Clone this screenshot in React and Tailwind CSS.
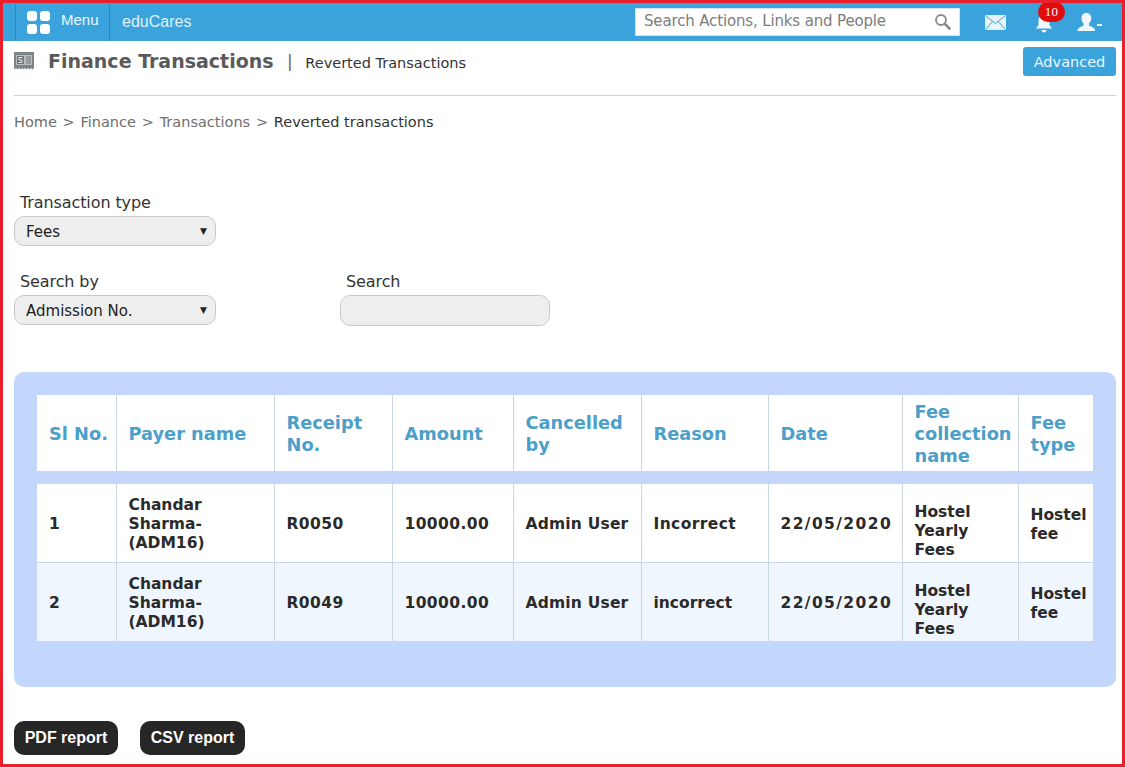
const columns = [
  { label: 'Sl No.', width: 'w-[79px]' },
  { label: 'Payer name', width: 'w-[158px]' },
  { label: 'Receipt No.', width: 'w-[118px]' },
  { label: 'Amount', width: 'w-[121px]' },
  { label: 'Cancelled by', width: 'w-[128px]' },
  { label: 'Reason', width: 'w-[127px]' },
  { label: 'Date', width: 'w-[134px]' },
  { label: 'Fee collection name', width: 'w-[116px]' },
  { label: 'Fee type', width: 'w-[75px]' },
];

const rows = [
  { sl: '1', reason: 'Incorrect', reasonClass: 'tracking-[0.400px]', receipt: 'R0050', bg: 'bg-white' },
  { sl: '2', reason: 'incorrect', reasonClass: '', receipt: 'R0049', bg: 'bg-[#f0f6fe]' },
];

function MenuIcon() {
  return (
    <svg width="23" height="23" viewBox="0 0 23 23" fill="#fff">
      <rect x="0" y="0" width="10" height="10" rx="3" />
      <rect x="13" y="0" width="10" height="10" rx="3" />
      <rect x="0" y="13" width="10" height="10" rx="3" />
      <rect x="13" y="13" width="10" height="10" rx="3" />
    </svg>
  );
}

function ReceiptIcon() {
  return (
    <svg width="20" height="18" viewBox="0 0 20 18">
      <path d="M0 0h20v16l-1.500 1.500-1.500-1.500-1.500 1.500-1.500-1.500-1.500 1.500-1.500-1.500-1.500 1.500-1.500-1.500-1.500 1.500-1.500-1.500-1.500 1.500-1.500-1.500-1.500 1.500L0 16z" fill="#7d8487" />
      <rect x="2" y="3" width="16" height="10" fill="#b9bec0" />
      <rect x="3" y="4" width="7" height="8" fill="#6d7477" />
      <path d="M12 5h5M12 7h5M12 9h5M12 11h5" stroke="#70777a" strokeWidth="1" />
      <path d="M8.500 5.500H5v2.500h3v2.500H4.500" stroke="#e8ecee" strokeWidth="1" fill="none" />
    </svg>
  );
}

function SearchIcon() {
  return (
    <svg width="17" height="17" viewBox="0 0 17 17" fill="none" stroke="#8a8a8a">
      <circle cx="7" cy="7" r="5" strokeWidth="1.800" />
      <path d="M10.800 10.800 15.500 15.500" strokeWidth="2.600" strokeLinecap="round" />
    </svg>
  );
}

function MailIcon() {
  return (
    <svg width="21" height="15" viewBox="0 0 21 15">
      <rect x="0" y="0" width="21" height="15" fill="#e6f4fb" />
      <path d="M0.500 0.500 10.500 8.500 20.500 0.500M0.500 14.500 7.500 6.500M20.500 14.500 13.500 6.500" stroke="#3ba3dc" strokeWidth="1" fill="none" />
    </svg>
  );
}

function BellIcon() {
  return (
    <svg width="18" height="19" viewBox="0 0 18 19" fill="#f2f9fd">
      <path d="M9 1c3.500 0 5.500 2.500 5.500 6v4l2.500 3.500H1L3.500 11V7C3.500 3.500 5.500 1 9 1z" />
      <path d="M6.500 16h5c0 1.500-1 2.500-2.500 2.500S6.500 17.500 6.500 16z" />
    </svg>
  );
}

function UserIcon() {
  return (
    <svg width="28" height="22" viewBox="0 0 28 22" fill="#f2f9fd">
      <path d="M9.500 1c3 0 4.800 2 4.800 5 0 2.500-1 4.500-2.300 5.500v2c2 1 5.500 2 6 4.500v1H0.500v-1c.5-2.500 4-3.500 6-4.500v-2C5.200 10.500 4.500 8.500 4.500 6c0-3 2-5 5-5z" />
      <rect x="20" y="12" width="5" height="2" />
    </svg>
  );
}

function Chevron() {
  return <span className="text-[9px] leading-none text-[#222]">▼</span>;
}

function FakeSelect({ value }) {
  return (
    <div className="w-[202px] h-[30px] rounded-[10px] border border-[#c9c9c9] bg-[#eeeeee] flex items-center justify-between pl-[11px] pr-[8px] text-[15px] text-[#222]">
      <span className="pt-[2px]">{value}</span>
      <Chevron />
    </div>
  );
}

export default function App() {
  const cell = 'pl-[12px] pt-[4px] border-l border-[#c9d6e4]';

  return (
    <div className="w-[1125px] h-[767px] border-[3px] border-[#e8202e] bg-white overflow-hidden font-['DejaVu_Sans',Verdana,sans-serif]">
      {/* top bar */}
      <div className="h-[38px] bg-[#3ba3dc] flex items-center pl-[12px] pr-[17px] text-white">
        <div className="h-[37px] w-[95px] flex items-center gap-[11px] pl-[11px] border-l border-r border-[#2c86ba]">
          <MenuIcon />
          <span className="font-['Liberation_Sans',sans-serif] text-[15px] -mt-[3px] text-[#eaf6fc]">Menu</span>
        </div>
        <span className="ml-[12px] text-[16px] font-['Liberation_Sans',sans-serif] text-[#dff2fb]">eduCares</span>
        <div className="ml-auto w-[325px] h-[28px] bg-white border border-[#d4e3ec] flex items-center justify-between pl-[8px] pr-[8px] -mt-[1px]">
          <span className="text-[15px] text-[#7d7d7d] tracking-[-0.150px]">Search Actions, Links and People</span>
          <SearchIcon />
        </div>
        <div className="ml-[25px]"><MailIcon /></div>
        <div className="relative ml-[29px] mt-[2px]">
          <BellIcon />
          <span className="absolute -top-[12px] -right-[12px] w-[27px] h-[20px] rounded-full bg-[#e00c0c] text-white text-[13px] font-['Liberation_Serif',serif] flex items-center justify-center tracking-[0.300px]">10</span>
        </div>
        <div className="ml-[24px] mt-[1px]"><UserIcon /></div>
      </div>

      {/* page title */}
      <div className="ml-[11px] w-[1102px] h-[55px] border-b border-[#d2d2d2] flex items-start">
        <div className="mt-[11px]"><ReceiptIcon /></div>
        <h1 className="ml-[14px] mt-[6px] text-[19px] font-bold text-[#5a5a5a]">Finance Transactions</h1>
        <span className="ml-[14px] mt-[11px] text-[18px] leading-[18px] text-[#666] font-['Liberation_Sans',sans-serif]">|</span>
        <span className="ml-[13px] mt-[12px] text-[14.500px] text-[#333]">Reverted Transactions</span>
        <button className="ml-auto mt-[6px] w-[93px] h-[29px] pt-[2px] rounded-[3px] bg-[#3ba3dc] text-[#eaf8ff] text-[14.500px]">Advanced</button>
      </div>

      {/* breadcrumb */}
      <div className="ml-[11px] mt-[16px] text-[14.500px] leading-[20px] text-[#6e6e6e] flex gap-[5.750px]">
        <span>Home</span>
        <span>&gt;</span>
        <span>Finance</span>
        <span>&gt;</span>
        <span>Transactions</span>
        <span>&gt;</span>
        <span className="text-[#333]">Reverted transactions</span>
      </div>

      {/* filters */}
      <div className="ml-[11px] mt-[61px]">
        <label className="block ml-[6px] text-[16px] leading-[20px] text-[#333] tracking-[-0.100px]">Transaction type</label>
        <div className="mt-[3px]"><FakeSelect value="Fees" /></div>
        <div className="mt-[26px] flex">
          <div>
            <label className="block ml-[6px] text-[16px] leading-[20px] text-[#333] tracking-[-0.100px]">Search by</label>
            <div className="mt-[3px]"><FakeSelect value="Admission No." /></div>
          </div>
          <div className="ml-[124px]">
            <label className="block ml-[6px] text-[16px] leading-[20px] text-[#333] tracking-[-0.100px]">Search</label>
            <div className="mt-[3px] w-[210px] h-[31px] rounded-[10px] border border-[#c9c9c9] bg-[#eeeeee]"></div>
          </div>
        </div>
      </div>

      {/* table */}
      <div className="ml-[11px] mt-[46px] w-[1102px] h-[315px] rounded-[10px] bg-[#c2d7fb] pt-[23px] pl-[23px]">
        <table className="table-fixed w-[1056px] border-collapse text-[15.500px] leading-[19px] font-bold text-[#2a2a2a]">
          <thead>
            <tr className="h-[76px] bg-white">
              {columns.map((col, i) => (
                <th key={col.label} className={`${col.width} pl-[12px] pr-[4px] pt-[1px] text-left text-[17.800px] leading-[22px] font-bold text-[#4b9fc9] ${i ? 'border-l border-[#c9d6e4]' : ''}`}>
                  {col.label}
                </th>
              ))}
            </tr>
            <tr className="h-[13px]"><th colSpan={9}></th></tr>
          </thead>
          <tbody>
            {rows.map((row) => (
              <tr key={row.sl} className={`h-[78px] last:h-[79px] ${row.bg} border-b border-[#c9d6e4] last:border-b-0`}>
                <td className="pl-[12px] pt-[4px]">{row.sl}</td>
                <td className={cell}>Chandar<br />Sharma-<br />(ADM16)</td>
                <td className={`${cell} tracking-[0.400px]`}>{row.receipt}</td>
                <td className={`${cell} tracking-[0.400px]`}>10000.00</td>
                <td className={`${cell} whitespace-nowrap tracking-[0.200px]`}>Admin User</td>
                <td className={`${cell} ${row.reasonClass}`}>{row.reason}</td>
                <td className={`${cell} tracking-[1.400px]`}>22/05/2020</td>
                <td className="pl-[12px] pt-[18px] border-l border-[#c9d6e4]">Hostel<br />Yearly<br />Fees</td>
                <td className={cell}>Hostel<br />fee</td>
              </tr>
            ))}
          </tbody>
        </table>
      </div>

      {/* report buttons */}
      <div className="ml-[11px] mt-[34px] flex gap-[22px] font-['Liberation_Sans',sans-serif]">
        <button className="w-[104px] h-[34px] rounded-[10px] bg-[#262626] text-white text-[16px] font-bold">PDF report</button>
        <button className="w-[105px] h-[34px] rounded-[10px] bg-[#262626] text-white text-[16px] font-bold">CSV report</button>
      </div>
    </div>
  );
}
